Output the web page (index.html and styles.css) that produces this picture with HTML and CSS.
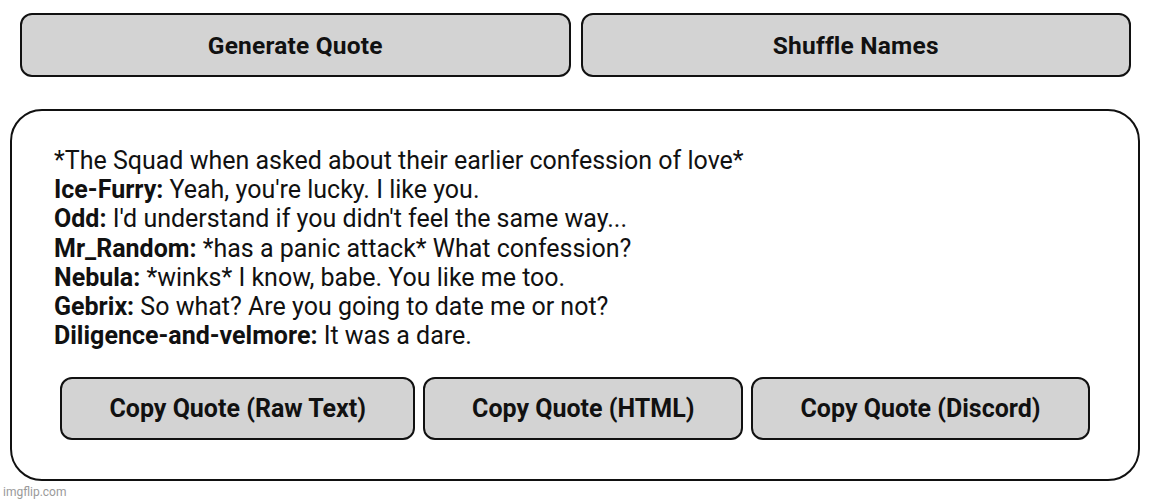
FILE: index.html
```html
<!DOCTYPE html>
<html>
<head>
  <title>Quote Generator</title>
  <link rel="stylesheet" href="styles.css">
</head>
<body>
  <div class="top-row">
    <button class="top-btn">Generate Quote</button>
    <button class="top-btn">Shuffle Names</button>
  </div>

  <div class="quote-card">
    <div class="quote-text">
      *The Squad when asked about their earlier confession of love*<br>
      <b>Ice-Furry:</b> Yeah, you're lucky. I like you.<br>
      <b>Odd:</b> I'd understand if you didn't feel the same way...<br>
      <b>Mr_Random:</b> *has a panic attack* What confession?<br>
      <b>Nebula:</b> *winks* I know, babe. You like me too.<br>
      <b>Gebrix:</b> So what? Are you going to date me or not?<br>
      <b>Diligence-and-velmore:</b> It was a dare.
    </div>

    <div class="copy-row">
      <button class="copy-btn">Copy Quote (Raw Text)</button>
      <button class="copy-btn">Copy Quote (HTML)</button>
      <button class="copy-btn">Copy Quote (Discord)</button>
    </div>
  </div>

  <div class="watermark">imgflip.com</div>
</body>
</html>
```

FILE: styles.css
```css
/* Ogólne */
body {
  margin: 0;
  padding: 13px 0 0 0;
  font-family: Roboto, "Liberation Sans", sans-serif;
  background-color: #ffffff;
  color: #111;
}

button {
  font-family: Roboto, "Liberation Sans", sans-serif;
  color: #111;
  background-color: #d3d3d3;
  border: 2px solid #111;
  cursor: pointer;
}

/* Górne przyciski */
.top-row {
  display: flex;
  gap: 10px;
  margin-left: 20px;
  width: 1111px;
}

.top-btn {
  flex: 1;
  height: 64px;
  border-radius: 12px;
  font-size: 24.5px;
  font-weight: 700;
  letter-spacing: 0.2px;
}

/* Karta z cytatem */
.quote-card {
  margin: 32px 0 0 10px;
  width: 1130px;
  box-sizing: border-box;
  border: 2px solid #111;
  border-radius: 32px;
  padding: 35px 42px 39px 42px;
}

.quote-text {
  font-size: 25px;
  line-height: 29.2px;
}

.quote-text b {
  font-weight: 700;
}

.copy-row {
  display: flex;
  justify-content: center;
  gap: 8px;
  margin-top: 27px;
}

.copy-btn {
  height: 63px;
  padding: 0 47px;
  border-radius: 12px;
  font-size: 25px;
  font-weight: 700;
}

.watermark {
  margin: 4px 0 0 3px;
  font-size: 12px;
  color: #9a9a9a;
}
```
